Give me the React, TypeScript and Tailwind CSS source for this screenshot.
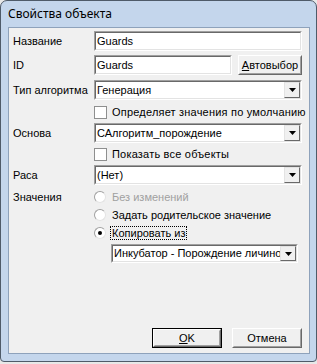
import React from "react";

const font = { fontFamily: '"Liberation Sans", Arial, sans-serif' };

function Sunken({ className, children }: { className?: string; children?: React.ReactNode }) {
  return (
    <div className={`border border-t-[#a0a0a0] border-l-[#a0a0a0] border-r-white border-b-white ${className ?? ""}`}>
      <div className="h-full w-full border border-t-[#696969] border-l-[#696969] border-r-[#e3e3e3] border-b-[#e3e3e3] bg-white flex items-center">
        {children}
      </div>
    </div>
  );
}

function Arrow() {
  return (
    <div className="h-full w-[16px] shrink-0 bg-[#f0f0f0] border border-t-[#e3e3e3] border-l-[#e3e3e3] border-r-[#696969] border-b-[#696969] flex items-center justify-center">
      <svg width="7" height="4" viewBox="0 0 7 4">
        <path d="M0 0H7L3.5 4Z" fill="#000" />
      </svg>
    </div>
  );
}

function Combo({ text, className }: { text: string; className?: string }) {
  return (
    <Sunken className={className}>
      <div className="flex-1 overflow-hidden whitespace-nowrap pl-[1px] text-[11px] text-black">{text}</div>
      <Arrow />
    </Sunken>
  );
}

function Check({ label }: { label: string }) {
  return (
    <div className="flex items-center whitespace-nowrap">
      <div className="w-[13px] h-[13px] shrink-0 border border-[#8e8f8f] bg-white" />
      <span className="ml-[5px] text-[11px] text-black tracking-[0.2px] whitespace-nowrap">{label}</span>
    </div>
  );
}

function Radio({ label, checked, disabled, focus }: { label: string; checked?: boolean; disabled?: boolean; focus?: boolean }) {
  return (
    <div className="flex items-center h-[18px]">
      <div className="w-[12px] h-[12px] rounded-full border border-t-[#a0a0a0] border-l-[#a0a0a0] border-r-[#e3e3e3] border-b-[#e3e3e3] bg-white flex items-center justify-center">
        {checked && <div className="w-[4px] h-[4px] rounded-full bg-black" />}
      </div>
      <span
        className={`ml-[4px] px-[1px] text-[11px] leading-[12px] whitespace-nowrap ${disabled ? "text-[#a0a0a0]" : "text-black"} ${
          focus ? "border border-dotted border-black" : "border border-transparent"
        }`}
      >
        {label}
      </span>
    </div>
  );
}

function Button({ children, def, className }: { children: React.ReactNode; def?: boolean; className?: string }) {
  return (
    <div className={`${def ? "border border-[#000]" : ""} ${className ?? ""}`}>
      <div className="h-full w-full border border-t-white border-l-white border-r-[#696969] border-b-[#696969] bg-[#f0f0f0]">
        <div className="h-full w-full border border-t-[#f0f0f0] border-l-[#f0f0f0] border-r-[#a0a0a0] border-b-[#a0a0a0] flex items-center justify-center text-[11px] text-black">
          {children}
        </div>
      </div>
    </div>
  );
}

export default function App() {
  return (
    <div className="w-[317px] h-[364px] bg-[#e8e8e8] relative" style={font}>
      <div className="w-[317px] h-[362px] rounded-t-[7px] rounded-b-[4px] border border-[#4f5b69] bg-[#c4d6ec] pl-[7px] pr-[6px] pb-[7px] flex flex-col">
        <div className="h-[26px] flex items-center text-[12px] text-black" style={{ fontFamily: '"Noto Sans", "Liberation Sans", sans-serif' }}>
          Свойства объекта
        </div>
        <div className="flex-1 border border-[#8ea2bb] bg-[#f0f0f0] flex flex-col pl-[4px] pr-[7px] pt-[3px]">
          <div className="flex items-center">
            <div className="w-[81px] text-[11px]">Название</div>
            <Sunken className="w-[208px] h-[20px]">
              <span className="pl-[1px] text-[11px]">Guards</span>
            </Sunken>
          </div>
          <div className="flex items-center mt-[4px]">
            <div className="w-[81px] text-[11px]">ID</div>
            <Sunken className="w-[138px] h-[20px]">
              <span className="pl-[1px] text-[11px]">Guards</span>
            </Sunken>
            <Button className="ml-[6px] w-[64px] h-[20px]">
              <span>
                <span className="underline">А</span>втовыбор
              </span>
            </Button>
          </div>
          <div className="flex items-center mt-[5px]">
            <div className="w-[81px] text-[11px]">Тип алгоритма</div>
            <Combo text="Генерация" className="w-[208px] h-[20px]" />
          </div>
          <div className="ml-[81px] mt-[3px] h-[18px] flex items-center">
            <Check label="Определяет значения по умолчанию" />
          </div>
          <div className="flex items-center mt-[2px]">
            <div className="w-[81px] text-[11px]">Основа</div>
            <Combo text="САлгоритм_порождение" className="w-[208px] h-[20px]" />
          </div>
          <div className="ml-[81px] mt-[2px] h-[18px] flex items-center">
            <Check label="Показать все объекты" />
          </div>
          <div className="flex items-center mt-[2px]">
            <div className="w-[81px] text-[11px]">Раса</div>
            <Combo text="(Нет)" className="w-[208px] h-[20px]" />
          </div>
          <div className="flex mt-[3px]">
            <div className="w-[81px] h-[18px] flex items-center text-[11px]">Значения</div>
            <div className="flex flex-col">
              <Radio label="Без изменений" disabled />
              <Radio label="Задать родительское значение" />
              <Radio label="Копировать из" checked focus />
            </div>
          </div>
          <div className="ml-[98px] mt-[2px]">
            <Combo text="Инкубатор - Порождение личинок" className="w-[187px] h-[19px]" />
          </div>
          <div className="flex-1" />
          <div className="flex justify-end pb-[5px] pr-[0px]">
            <Button def className="w-[70px] h-[20px]">
              <span>
                <span className="underline">O</span>K
              </span>
            </Button>
            <Button className="ml-[10px] w-[70px] h-[20px]">Отмена</Button>
          </div>
        </div>
      </div>
    </div>
  );
}
